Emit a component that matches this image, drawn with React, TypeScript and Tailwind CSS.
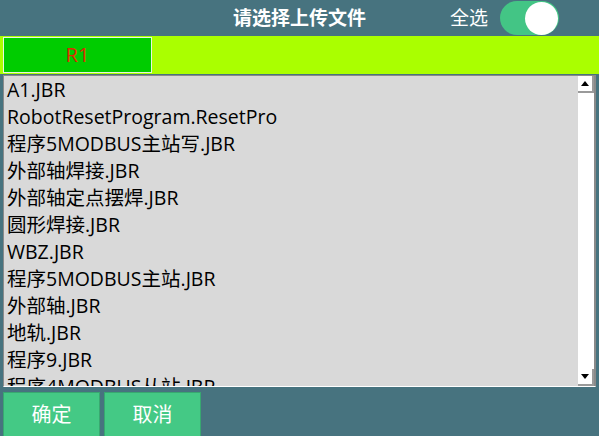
import { useState } from "react";

const files = [
  "A1.JBR",
  "RobotResetProgram.ResetPro",
  "程序5MODBUS主站写.JBR",
  "外部轴焊接.JBR",
  "外部轴定点摆焊.JBR",
  "圆形焊接.JBR",
  "WBZ.JBR",
  "程序5MODBUS主站.JBR",
  "外部轴.JBR",
  "地轨.JBR",
  "程序9.JBR",
  "程序4MODBUS从站.JBR",
  "程序3.JBR",
];

const font = { fontFamily: '"Open Sans", "Noto Sans CJK SC", sans-serif' };

export default function App() {
  const [all, setAll] = useState(true);

  return (
    <div className="w-[599px] h-[436px] bg-[#47737f] flex flex-col overflow-hidden" style={font}>
      {/* header */}
      <div className="h-9 shrink-0 flex items-center relative">
        <div className="flex-1 text-center text-white font-bold text-[19px]">请选择上传文件</div>
        <div className="absolute right-[40px] top-0 h-9 flex items-center gap-3">
          <span className="text-white text-[19px]">全选</span>
          <button
            onClick={() => setAll(!all)}
            className="w-[59px] h-[34px] rounded-full bg-[#43c585] flex items-center px-[1px] justify-end"
          >
            <span className="w-[33px] h-[33px] rounded-full bg-white block" />
          </button>
        </div>
      </div>

      {/* robot tabs */}
      <div className="h-[38px] shrink-0 bg-[#aaff00] flex items-center pl-[3px]">
        <div className="w-[149px] h-[36px] bg-[#00cc00] border border-[#e8f5e0] flex items-center justify-center text-[#e02a00] text-[20px]">
          R1
        </div>
      </div>

      {/* list */}
      <div className="mx-[3px] mt-[1px] h-[312px] shrink-0 flex border border-[#8a8a8a] border-b-white bg-[#d9d9d9]">
        <div className="flex-1 overflow-hidden pl-[3px] text-black text-[19.5px]">
          {files.map((f) => (
            <div key={f} className="h-[27px] leading-[27px] whitespace-nowrap">
              {f}
            </div>
          ))}
        </div>
        <div className="w-[17px] bg-white flex flex-col justify-between border-r border-[#8a8a8a]">
          <div className="h-[17px] border-b-2 border-r-2 border-[#9a9a9a] flex items-center justify-center">
            <svg width="8" height="5" viewBox="0 0 8 5"><path d="M0 5 L4 0 L8 5 Z" fill="#000" /></svg>
          </div>
          <div className="h-[17px] border-b-2 border-r-2 border-[#9a9a9a] flex items-center justify-center">
            <svg width="8" height="5" viewBox="0 0 8 5"><path d="M0 0 L8 0 L4 5 Z" fill="#000" /></svg>
          </div>
        </div>
      </div>

      {/* buttons */}
      <div className="flex gap-[4px] pl-[3px] pt-[5px]">
        <button className="w-[97px] h-[46px] bg-[#44c985] border border-[#38a870] text-white text-[20px] leading-none">
          确定
        </button>
        <button className="w-[97px] h-[46px] bg-[#44c985] border border-[#38a870] text-white text-[20px] leading-none">
          取消
        </button>
      </div>
    </div>
  );
}
